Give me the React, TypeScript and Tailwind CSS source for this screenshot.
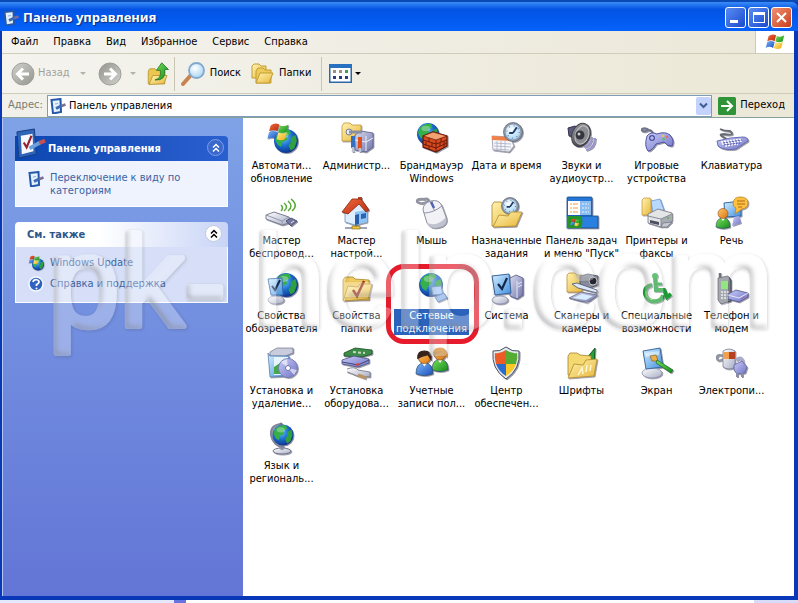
import type { ReactNode } from "react";

type IconProps = { size?: number };

function Svg({ size = 32, children }: { size?: number; children: ReactNode }) {
  return (
    <svg width={size} height={size} viewBox="0 0 32 32" aria-hidden="true" className="shrink-0 overflow-visible">
      {children}
    </svg>
  );
}

/* Shared gradients and filters for every icon */
function Defs() {
  const linear: [string, string, string][] = [
    ["gFolder", "#fff3b0", "#e8b73c"],
    ["gScreen", "#d8f0ff", "#3d8fe0"],
    ["gGrey", "#ffffff", "#a9aec6"],
    ["gSteel", "#d9dbee", "#6f74a8"],
    ["gGreen", "#7be05a", "#128a1c"],
    ["gRed", "#f0683c", "#b82c10"],
    ["gLilac", "#c9ccf8", "#6f73c4"],
    ["gOrange", "#ffc76a", "#dc7410"],
    ["gBlue", "#7db8ff", "#1a4fb8"],
    ["gYellow", "#fff08a", "#f0a810"],
    ["gOff", "#d2d2cc", "#94948e"],
    ["gDark", "#a8a8a8", "#2c2c34"],
  ];
  return (
    <svg width="0" height="0" aria-hidden="true" className="absolute">
      <defs>
        {linear.map(([id, a, b]) => (
          <linearGradient key={id} id={id} x1="0" y1="0" x2="1" y2="1">
            <stop offset="0" stopColor={a} />
            <stop offset="1" stopColor={b} />
          </linearGradient>
        ))}
        <radialGradient id="gGlobe" cx="0.4" cy="0.35" r="0.7">
          <stop offset="0" stopColor="#6fc8f8" />
          <stop offset="0.5" stopColor="#1c6ed0" />
          <stop offset="1" stopColor="#0c2c80" />
        </radialGradient>
        <radialGradient id="gGlass" cx="0.4" cy="0.35" r="0.7">
          <stop offset="0" stopColor="#ffffff" />
          <stop offset="1" stopColor="#a4d4f4" />
        </radialGradient>
        <filter id="soft" x="-20%" y="-20%" width="150%" height="150%">
          <feDropShadow dx="1" dy="1" stdDeviation="0.7" floodColor="#303048" floodOpacity="0.5" />
        </filter>
        <filter id="emboss" x="-5%" y="-20%" width="110%" height="150%">
          <feOffset in="SourceAlpha" dx="3" dy="-3" result="o1" />
          <feComposite in="SourceAlpha" in2="o1" operator="out" result="edge" />
          <feGaussianBlur in="edge" stdDeviation="2.5" result="edgeBlur" />
          <feFlood floodColor="#50505c" floodOpacity="0.6" />
          <feComposite in2="edgeBlur" operator="in" />
          <feComposite in2="SourceAlpha" operator="in" result="inner" />
          <feGaussianBlur in="SourceAlpha" stdDeviation="1.5" />
          <feOffset dx="1" dy="1" />
          <feComposite in2="SourceAlpha" operator="out" result="outBlur" />
          <feFlood floodColor="#303038" floodOpacity="0.2" />
          <feComposite in2="outBlur" operator="in" result="outer" />
          <feFlood floodColor="#ffffff" floodOpacity="0.3" />
          <feComposite in2="SourceAlpha" operator="in" result="body" />
          <feMerge>
            <feMergeNode in="outer" />
            <feMergeNode in="body" />
            <feMergeNode in="inner" />
          </feMerge>
        </filter>
      </defs>
    </svg>
  );
}

function Globe({ cx, cy, r }: { cx: number; cy: number; r: number }) {
  return (
    <g transform={`translate(${cx} ${cy}) scale(${r / 10})`}>
      <circle r="10" fill="url(#gGlobe)" />
      <path d="M-8 -5C-5 -9 0 -10 3 -9L4 -6L0 -4L1 -1L-3 1L-4 5L-7 3L-9 -1Z" fill="#35b04a" />
      <path d="M4 -3L8 -5L9 0L7 6L4 8L2 4L4 1Z" fill="#2ea040" />
      <ellipse cx="-2" cy="-5" rx="4" ry="2.5" fill="#fff" opacity="0.3" />
    </g>
  );
}

function Flag() {
  return (
    <>
      <path d="M2 4Q7 0 12 3L10 11Q6 8 0 11Z" fill="url(#gRed)" />
      <path d="M13 4Q18 6 23 3L21 11Q16 14 11 11Z" fill="url(#gGreen)" />
      <path d="M0 12Q5 9 10 12L8 20Q3 17 -2 20Z" fill="url(#gBlue)" />
      <path d="M11 12Q16 15 21 12L19 20Q14 23 9 20Z" fill="url(#gYellow)" />
    </>
  );
}

function FolderBase() {
  return (
    <>
      <path d="M2 8L4 5H12L14 7L28 8V28H2Z" fill="#f0cc60" stroke="#a8842c" strokeWidth="0.8" />
      <path d="M2 29L7 14L17 15L19 12H31L27 27Z" fill="url(#gFolder)" stroke="#b08a2c" strokeWidth="0.8" />
    </>
  );
}

function Panel({ size }: IconProps) {
  return (
    <Svg size={size}>
      <path d="M2 4L20 1L22 27L4 31Z" fill="#2f65b8" stroke="#173c80" />
      <path d="M6 8L18 6L19 24L7 27Z" fill="#f6f8ff" />
      <path d="M9 15L12 20L17 8" fill="none" stroke="#98202c" strokeWidth="2.2" />
      <path d="M15 21L26 15" stroke="#6ca0dc" strokeWidth="4" />
      <path d="M25 15.500L31 13" stroke="#c85050" strokeWidth="4" />
    </Svg>
  );
}

function SmallPanel() {
  return (
    <svg width="16" height="16" viewBox="0 0 16 16" aria-hidden="true" className="shrink-0">
      <path d="M1.500 2L10.500 1L11 14L3 15.500Z" fill="#e4f0fc" stroke="#2458a8" strokeWidth="2" />
      <path d="M5 6L8 5.500" stroke="#90b4e0" />
      <path d="M6 10.500L12 7.500" stroke="#3c6cb4" strokeWidth="3" />
      <path d="M11.500 8L15.500 6.500" stroke="#7c6c98" strokeWidth="2.500" />
    </svg>
  );
}

function WindowsUpdate({ size }: IconProps) {
  return (
    <Svg size={size}>
      <g filter="url(#soft)">
        <Globe cx={20} cy={19} r={12} />
        <g transform="translate(3 0) scale(0.85)"><Flag /></g>
      </g>
    </Svg>
  );
}

function AdminTools() {
  return (
    <Svg>
      <g filter="url(#soft)">
        <path d="M1 4L3 1H9L11 3H20V19H1Z" fill="url(#gFolder)" stroke="#c09838" strokeWidth="0.8" />
        <path d="M14 13L20 9L32 11V25L25 30L14 28Z" fill="url(#gSteel)" stroke="#555a8c" strokeWidth="0.8" />
        <path d="M25 14V29M14 18L25 20L32 16" stroke="#eceefc" fill="none" />
        <circle cx="8" cy="10" r="3" fill="#e8eaf2" stroke="#777c90" />
        <path d="M8 10H21" stroke="#8a90a4" strokeWidth="3" />
        <path d="M12 14V26" stroke="#3470c0" strokeWidth="4" />
        <path d="M19 15V27" stroke="#e05024" strokeWidth="4" />
        <path d="M12 25V30M19 26V30" stroke="#bcc4d4" strokeWidth="2.500" />
      </g>
    </Svg>
  );
}

function Firewall() {
  return (
    <Svg>
      <g filter="url(#soft)">
        <Globe cx={12} cy={12} r={11} />
        <path d="M7 14L17 10L31 14V24L20 30L7 25Z" fill="#d84a1c" stroke="#55180c" strokeWidth="1.2" />
        <path d="M7 14L20 18L31 14L17 10Z" fill="#f4a070" stroke="#702010" strokeWidth="0.8" />
        <path d="M7 18L20 22L31 18M7 22L20 26L31 21M20 18V30M13 16V20M10 20V24M16 21V25M13 24V28M25 16V20M28 19V22M24 21V24M28 22V26" fill="none" stroke="#6c1c0c" />
      </g>
    </Svg>
  );
}

function Clock({ cx, cy, r }: { cx: number; cy: number; r: number }) {
  return (
    <g transform={`translate(${cx} ${cy}) scale(${r / 10})`}>
      <circle r="10" fill="#8e98a8" stroke="#5a6474" strokeWidth="0.8" />
      <circle r="7.800" fill="url(#gGlass)" />
      <path d="M0 1L4 -5M0 1H-4" stroke="#1c3c68" strokeWidth="2" />
      <circle r="6.500" fill="none" stroke="#5a7ca4" strokeWidth="1.200" strokeDasharray="1 4.100" />
    </g>
  );
}

function DateTime() {
  return (
    <Svg>
      <g filter="url(#soft)">
        <path d="M1 14L19 15L23 24L18 30L2 28Z" fill="#f8f8fc" stroke="#9090a0" strokeWidth="0.800" />
        <path d="M1 14L19 15L20 19L1 18Z" fill="#f08048" />
        <path d="M3 21L20 22M3 24L20 25M3 27L18 28M6 19V28M10 19V29M14 19V29" stroke="#b0b4c8" strokeWidth="0.900" />
        <Clock cx={22} cy={10} r={9.5} />
      </g>
    </Svg>
  );
}

function Sounds() {
  return (
    <Svg>
      <g filter="url(#soft)">
        <path d="M18 25Q25 24 26 15M20 28Q29 26 29 16" fill="none" stroke="#9a94d0" strokeWidth="2" />
        <path d="M2 6L9 4L15 8L11 15L3 14Z" fill="#5c5c80" stroke="#303048" />
        <ellipse cx="15" cy="13" rx="9" ry="12" transform="rotate(22 15 13)" fill="url(#gDark)" stroke="#404048" />
        <ellipse cx="16" cy="13" rx="6.500" ry="9.500" transform="rotate(22 16 13)" fill="#8c8c92" stroke="#c8c8cc" />
        <circle cx="14" cy="13" r="4.500" fill="#35353d" />
        <circle cx="13" cy="12" r="1.500" fill="#c8c8d0" />
      </g>
    </Svg>
  );
}

function Games() {
  return (
    <Svg>
      <g filter="url(#soft)">
        <path d="M12 12Q10 6 5 9Q0 10 1 7Q4 5 8 8" fill="none" stroke="#70748c" strokeWidth="2" />
        <path d="M6 14Q10 9 16 12Q24 9 29 13Q34 19 31 24Q27 25 23 20L15 22Q11 29 7 29Q3 24 6 14Z" fill="url(#gLilac)" stroke="#5054a0" />
        <circle cx="11" cy="16" r="3" fill="#4c50a0" />
        <path d="M9 16H13M11 14V18" stroke="#d8dafc" />
        <circle cx="22" cy="14" r="1.300" fill="#e0c860" />
        <circle cx="26" cy="15" r="1.300" fill="#e07070" />
        <circle cx="22.500" cy="17" r="1.300" fill="#60b868" />
      </g>
    </Svg>
  );
}

function KeyboardIcon() {
  return (
    <Svg>
      <g filter="url(#soft)">
        <path d="M11 17Q0 12 8 12Q20 14 14 9Q8 9 4 7" fill="none" stroke="#686c74" strokeWidth="1.800" />
        <path d="M1 19Q15 15 27 15Q32 15 32 19L20 27Q8 29 2 24Z" fill="url(#gLilac)" stroke="#6064ac" strokeWidth="0.900" />
        <path d="M5 20L26 17M6 22L26 19M9 24L22 22" stroke="#fff" strokeWidth="1.500" strokeDasharray="2 1" />
        <path d="M7 21L26 18M8 23L24 21" stroke="#484c98" strokeWidth="0.800" strokeDasharray="2 1" />
      </g>
    </Svg>
  );
}

function Wireless() {
  return (
    <Svg>
      <g filter="url(#soft)">
        <path d="M0 18L8 15L23 20V26L16 28L0 22Z" fill="url(#gGrey)" stroke="#70748c" strokeWidth="0.900" />
        <path d="M0 18L16 24L23 20M16 24V28" fill="none" stroke="#9498ac" />
        <path d="M20 24L25 21L31 24L25 29Z" fill="#74789c" stroke="#50547c" />
        <path d="M25 26L28 24" stroke="#e8eaf4" />
      </g>
      <path d="M15 8Q18 11 15 14M18 6Q23 10 18 14M22 4Q28 9 22 14M25 2Q33 8 26 14" fill="none" stroke="#58a838" strokeWidth="1.500" />
    </Svg>
  );
}

function NetworkHome() {
  return (
    <Svg>
      <path d="M4 31H26M15 27V31" stroke="#8088a0" strokeWidth="1.500" />
      <rect x="11" y="29" width="8" height="3" fill="#e8c440" stroke="#94761c" strokeWidth="0.700" />
      <g filter="url(#soft)">
        <path d="M4 15L16 4L26 14V25L14 28L4 25Z" fill="#dceeff" stroke="#7090b4" strokeWidth="0.800" />
        <path d="M14 15L26 13V25L14 28Z" fill="#90c4f4" />
        <rect x="17" y="0" width="4" height="7" fill="#b84828" />
        <path d="M1 15L11 2L20 2L28 13L25 15L18 7L7 17Z" fill="url(#gRed)" stroke="#882810" strokeWidth="0.800" />
        <path d="M14 18L18 17V27L14 28Z" fill="#2c5cac" />
        <path d="M20 17L25 16V21L20 22Z" fill="#2c64b8" />
      </g>
    </Svg>
  );
}

function MouseIcon() {
  return (
    <Svg>
      <g filter="url(#soft)">
        <path d="M13 8Q14 0 8 2Q0 1 1 5Q6 8 12 4" fill="none" stroke="#9094a0" strokeWidth="2" />
        <path d="M7 13Q7 6 15 4Q23 2 26 9L30 20Q32 28 24 30Q15 33 11 26Z" fill="#f2f2f6" stroke="#8c8f9c" />
        <path d="M30 20Q32 28 24 30Q15 33 11 26Q22 30 30 20Z" fill="#c0c3d0" />
        <path d="M8 16Q17 16 26 9M16 4L18 13" fill="none" stroke="#8c90a4" />
        <path d="M15 5L18 11" stroke="#5064b0" strokeWidth="2.500" />
      </g>
    </Svg>
  );
}

function Scheduled() {
  return (
    <Svg>
      <g filter="url(#soft)">
        <path d="M1 8L3 5H10L12 7L25 8V29H1Z" fill="url(#gFolder)" stroke="#a8842c" strokeWidth="0.800" />
        <Clock cx={19} cy={9} r={8.5} />
        <path d="M2 30L8 18L17 19L20 15H31L25 29Z" fill="url(#gFolder)" stroke="#b08a2c" strokeWidth="0.800" />
      </g>
    </Svg>
  );
}

function Taskbar() {
  return (
    <Svg>
      <g filter="url(#soft)">
        <rect x="1" y="0" width="25" height="20" rx="1" fill="#2676d8" stroke="#184888" strokeWidth="0.800" />
        <rect x="2" y="4" width="12" height="14" fill="#fff" />
        <rect x="14" y="4" width="11" height="14" fill="#8cbcf0" />
        <path d="M4 7H12M4 11H12M4 15H12" stroke="#f0a040" strokeDasharray="2 1 5 1" />
        <path d="M16 7H23M16 11H23M16 15H23" stroke="#e4f2ff" strokeDasharray="2 1" />
        <rect x="1" y="19" width="31" height="12" fill="#2c80e0" stroke="#184888" strokeWidth="0.800" />
        <path d="M1 19H15Q18 25 15 31H1Z" fill="#24942c" />
        <g transform="translate(5 21) scale(0.380)"><Flag /></g>
      </g>
    </Svg>
  );
}

function Printers() {
  return (
    <Svg>
      <g filter="url(#soft)">
        <path d="M1 3L3 1H9L10 3V18H1Z" fill="url(#gFolder)" stroke="#c89c38" strokeWidth="0.800" />
        <path d="M10 4L19 2L23 13L12 16Z" fill="#b8d8fc" stroke="#6c94c8" strokeWidth="0.800" />
        <path d="M7 17L17 12L31 16V24L20 30L7 26Z" fill="#e4e5e6" stroke="#707480" strokeWidth="0.800" />
        <path d="M20 22L31 17V24L20 30Z" fill="#a8abb2" />
        <path d="M7 19L20 22L31 17M20 22V30" fill="none" stroke="#888c98" />
        <path d="M9 23L18 25V28L9 26Z" fill="#4c5060" />
        <path d="M22 26L31 25L26 30L20 30Z" fill="#c4c8d0" stroke="#606470" strokeWidth="0.600" />
        <circle cx="27" cy="21" r="1" fill="#58b048" />
      </g>
    </Svg>
  );
}

function Person({ x, y, shirt, hair }: { x: number; y: number; shirt: string; hair?: string }) {
  return (
    <g transform={`translate(${x} ${y})`}>
      <path d="M0 19Q0 10 7 10Q14 10 14 19Q7 22 0 19Z" fill={shirt} stroke="#284868" strokeWidth="0.600" />
      <path d="M5 10L7 13L9 10Z" fill="#fff" />
      <circle cx="7" cy="5.500" r="5" fill="url(#gOrange)" stroke="#8c4c14" strokeWidth="0.600" />
      {hair && <path d="M1.500 6Q1 0 7 0Q13 0 12.500 7L10 3Q5 4 1.500 6Z" fill={hair} stroke={hair} />}
    </g>
  );
}

function Speech() {
  return (
    <Svg>
      <g filter="url(#soft)">
        <path d="M8 6L25 4L25 19L9 20Z" fill="url(#gScreen)" stroke="#3468a0" />
        <path d="M18 20L23 19L25 26L16 29Z" fill="url(#gLilac)" />
        <path d="M24 0Q32 0 32 6Q32 11 26 12L19 17L20 11Q17 10 17 6Q18 0 24 0Z" fill="#ffc040" stroke="#bc8020" strokeWidth="0.800" />
        <path d="M21 4H29M21 7H29M22 10H26" stroke="#a86c18" />
        <Person x={0} y={11} shirt="url(#gGreen)" />
      </g>
    </Svg>
  );
}

function InternetOptions() {
  return (
    <Svg>
      <g filter="url(#soft)">
        <Globe cx={20} cy={13} r={12} />
        <ellipse cx="10" cy="28" rx="8" ry="4" fill="url(#gGrey)" stroke="#8488a8" strokeWidth="0.700" />
        <path d="M2 7L16 6L17 23L5 23Z" fill="url(#gScreen)" stroke="#386cac" />
        <path d="M6 14L9 18L14 8" fill="none" stroke="#14284c" strokeWidth="2" />
      </g>
    </Svg>
  );
}

function FolderOptions() {
  return (
    <Svg>
      <g filter="url(#soft)">
        <FolderBase />
        <path d="M12 18L16 24L23 9" fill="none" stroke="#982818" strokeWidth="2.500" />
      </g>
    </Svg>
  );
}

function Network() {
  return (
    <Svg>
      <Globe cx={15} cy={13} r={12} />
      <g filter="url(#soft)">
        <path d="M15 15L25 14L27 22L17 23Z" fill="#a4c8f8" stroke="#5884c0" />
        <path d="M19 25L28 21L31 26L22 30Z" fill="#8cb0e8" stroke="#5078b4" />
      </g>
    </Svg>
  );
}

function System() {
  return (
    <Svg>
      <g filter="url(#soft)">
        <path d="M19 6L25 3L32 6V23L26 27L19 24Z" fill="url(#gSteel)" stroke="#545888" strokeWidth="0.800" />
        <path d="M26 9V26M27 12L31 10M27 15L31 13" stroke="#e8eafc" />
        <ellipse cx="9" cy="28" rx="8" ry="4" fill="url(#gGrey)" stroke="#8084a4" strokeWidth="0.700" />
        <path d="M1 4L18 2L20 21L4 23Z" fill="url(#gScreen)" stroke="#3c649c" />
        <path d="M7 12L11 17L16 6" fill="none" stroke="#14284c" strokeWidth="2.200" />
      </g>
    </Svg>
  );
}

function Scanners() {
  return (
    <Svg>
      <g filter="url(#soft)">
        <path d="M1 3L3 1H9L11 3H16V20H1Z" fill="url(#gFolder)" stroke="#c09030" strokeWidth="0.800" />
        <path d="M14 4L22 2L32 4V13L23 16L14 12Z" fill="#8a8e9c" stroke="#484c58" strokeWidth="0.800" />
        <circle cx="27" cy="9" r="4" fill="#25252e" stroke="#c4c8d4" />
        <path d="M3 26L15 20L32 23L21 31Z" fill="url(#gSteel)" stroke="#606480" strokeWidth="0.800" />
        <path d="M7 26L16 22L27 24L20 28Z" fill="#d8ecff" />
        <path d="M6 12L11 11L31 18V21L12 16Z" fill="#dde8f8" stroke="#586078" strokeWidth="0.900" />
      </g>
    </Svg>
  );
}

function Accessibility() {
  return (
    <Svg>
      <g filter="url(#soft)" fill="none" stroke="#1f9c34" strokeWidth="4">
        <circle cx="14" cy="4" r="3" fill="#28a83c" stroke="none" />
        <path d="M14 6L15 18H23L26 25L30 22" />
        <path d="M11 13Q3 14 4 22Q7 31 16 29Q21 28 22 23" />
        <path d="M14 12H21" strokeWidth="3" />
        <path d="M5 19Q4 26 12 28" stroke="#80dc60" strokeWidth="1" />
      </g>
    </Svg>
  );
}

function PhoneModem() {
  return (
    <Svg>
      <g filter="url(#soft)">
        <path d="M4 6V1" stroke="#30343c" strokeWidth="2.500" />
        <path d="M2 6L12 4L15 8V29L5 32L2 28Z" fill="#7c828c" stroke="#30343c" strokeWidth="0.800" />
        <path d="M5 9H12V17H5Z" fill="#64dc48" />
        <path d="M5 20H13M5 23H13M5 26H13" stroke="#e4e8ec" strokeWidth="1.500" strokeDasharray="2 1" />
        <path d="M12 22L20 18L32 21V25L23 30L12 27Z" fill="url(#gLilac)" stroke="#50548c" strokeWidth="0.800" />
        <path d="M12 23L23 26L32 21" fill="none" stroke="#e4e6fc" />
        <path d="M25 27L30 24" stroke="#c84848" strokeDasharray="1 1" />
      </g>
    </Svg>
  );
}

function AddRemove() {
  return (
    <Svg>
      <g filter="url(#soft)">
        <path d="M4 5L11 1H27V6L19 9L4 9Z" fill="#c8ccdc" stroke="#70748c" strokeWidth="0.700" />
        <path d="M2 6L4 9H23V29L4 30Z" fill="url(#gScreen)" stroke="#5c7ca8" strokeWidth="0.800" />
        <path d="M8 10H22V28H8Z" fill="#e8f4fc" />
        <path d="M8 20L14 16L18 20V27H8Z" fill="#44a84c" />
        <circle cx="22" cy="21" r="9.500" fill="url(#gLilac)" stroke="#7074b0" strokeWidth="0.800" />
        <path d="M22 21L15 15L21 12ZM22 21L28 28L31 23Z" fill="#fff" opacity="0.600" />
        <circle cx="22" cy="21" r="2.500" fill="#fff" stroke="#7074b0" />
      </g>
    </Svg>
  );
}

function AddHardware() {
  return (
    <Svg>
      <g filter="url(#soft)">
        <path d="M3 6L14 1L31 3V7L21 10L3 9Z" fill="#3c8c48" stroke="#204c28" strokeWidth="0.800" />
        <path d="M12 5L24 6" stroke="#c4d8c0" strokeWidth="2" strokeDasharray="3 2" />
        <path d="M1 13L13 9L28 12V16L17 20L1 17Z" fill="url(#gLilac)" stroke="#4c5084" strokeWidth="0.800" />
        <path d="M1 15L17 18L28 13" fill="none" stroke="#404478" />
        <path d="M15 18L18 17" stroke="#d04848" strokeWidth="2" />
        <path d="M6 22Q14 19 17 23L29 25V30L16 29Q10 26 6 25" fill="url(#gGrey)" stroke="#70747c" strokeWidth="0.800" />
        <path d="M17 28L25 31" stroke="#bc9460" strokeWidth="3" />
      </g>
    </Svg>
  );
}

function Users() {
  return (
    <Svg>
      <g filter="url(#soft)">
        <g transform="translate(16 1) scale(1.150)"><Person x={0} y={0} shirt="url(#gGreen)" hair="#d88c28" /></g>
        <g transform="translate(0 4) scale(1.200)"><Person x={0} y={0} shirt="url(#gBlue)" hair="#35241c" /></g>
      </g>
    </Svg>
  );
}

function Security() {
  return (
    <Svg>
      <g filter="url(#soft)">
        <path d="M15 0Q21 5 28 4Q30 22 15 32Q0 22 2 4Q9 5 15 0Z" fill="#e4e8f0" stroke="#485060" />
        <path d="M15 3Q9 7 4 6Q3 11 5 17H15Z" fill="#ec5c28" />
        <path d="M15 3Q21 7 26 6Q27 11 25 17H15Z" fill="#54ac30" />
        <path d="M5 17H15V29Q8 25 5 17Z" fill="#2c6cd0" />
        <path d="M25 17H15V29Q22 25 25 17Z" fill="#fcc828" />
      </g>
    </Svg>
  );
}

function Fonts() {
  return (
    <Svg>
      <g filter="url(#soft)">
        <path d="M20 12L29 1L28 20Z" fill="#28a038" stroke="#145c20" />
        <path d="M2 9L4 6H11L14 8L25 9V28H2Z" fill="#f4d870" stroke="#a8842c" strokeWidth="0.800" />
        <path d="M2 31L8 17L17 18L20 13L31 12L28 29Z" fill="url(#gFolder)" stroke="#b08a2c" strokeWidth="0.800" />
        <path d="M12 28L16 21L17 27M21 18L20 25M25 18L24 24" stroke="#fff8d0" strokeWidth="1.500" fill="none" />
      </g>
    </Svg>
  );
}

function Display() {
  return (
    <Svg>
      <g filter="url(#soft)">
        <ellipse cx="11" cy="26" rx="10" ry="5" fill="url(#gGrey)" stroke="#8488a8" strokeWidth="0.700" />
        <path d="M2 4L19 1L22 20L5 22Z" fill="url(#gScreen)" stroke="#40689c" />
        <path d="M4 6L18 4L18 8L5 10Z" fill="#fff" opacity="0.500" />
        <path d="M9 9L15 8L17 14L11 14Z" fill="#e8b048" stroke="#90601c" strokeWidth="0.700" />
        <path d="M16 13L32 23L30 26L15 16Z" fill="url(#gGreen)" stroke="#186420" strokeWidth="0.700" />
      </g>
    </Svg>
  );
}

function Power() {
  return (
    <Svg>
      <g filter="url(#soft)">
        <path d="M8 9Q0 6 1 12Q2 15 7 12" fill="none" stroke="#9094a0" strokeWidth="2" />
        <path d="M7 4Q13 0 19 4V20Q13 24 7 20Z" fill="url(#gGrey)" stroke="#787c94" strokeWidth="0.800" />
        <path d="M7 5H13V12H7Z" fill="#f0a050" />
        <path d="M13 5H19V12H13Z" fill="#b84020" />
        <path d="M20 13Q26 8 27 16" fill="none" stroke="#a8accc" strokeWidth="3" />
        <path d="M18 18L26 14L31 20L29 26L21 27L18 23Z" fill="url(#gLilac)" stroke="#6468a0" strokeWidth="0.900" />
        <path d="M21 26V30M26 26V30" stroke="#888ca4" strokeWidth="2" />
      </g>
    </Svg>
  );
}

function Regional() {
  return (
    <Svg>
      <g filter="url(#soft)">
        <ellipse cx="16" cy="29" rx="9" ry="3" fill="url(#gGrey)" stroke="#707488" />
        <path d="M16 22V28" stroke="#8c90a4" strokeWidth="3" />
        <path d="M15 2Q4 3 5 13Q7 24 18 25" fill="none" stroke="#80849c" strokeWidth="2" />
        <Globe cx={17} cy={13} r={10.5} />
        <circle cx="15" cy="2" r="1.500" fill="#70748c" />
      </g>
    </Svg>
  );
}

function Help({ size }: IconProps) {
  return (
    <Svg size={size}>
      <circle cx="16" cy="16" r="14" fill="#2f62c0" stroke="#f4f8ff" strokeWidth="3" />
      <path d="M10 12Q11 7 16 7Q22 8 22 12Q21 16 17 17V20" fill="none" stroke="#fff" strokeWidth="3.500" />
      <circle cx="17" cy="25" r="2" fill="#fff" />
    </Svg>
  );
}

function RoundArrow({ flip }: { flip?: boolean }) {
  return (
    <svg width="24" height="24" viewBox="0 0 24 24" aria-hidden="true" className={flip ? "rotate-180" : ""}>
      <circle cx="12" cy="12" r="11" fill="url(#gOff)" stroke="#a0a09a" />
      <path d="M18 12H7M12 6.500L6.500 12L12 17.500" fill="none" stroke="#fff" strokeWidth="3" />
    </svg>
  );
}

function Caret({ className }: { className: string }) {
  return <span className={`inline-block border-x-[3px] border-t-[3px] border-x-transparent ${className}`} />;
}

function Chevrons() {
  return (
    <svg width="10" height="12" viewBox="0 0 10 12" aria-hidden="true">
      <path d="M2 5.500L5 2.500L8 5.500M2 9.500L5 6.500L8 9.500" fill="none" stroke="currentColor" strokeWidth="1.500" />
    </svg>
  );
}

type Item = { lines: string[]; icon: () => ReactNode; selected?: boolean };

const items: Item[] = [
  { lines: ["Автомати...", "обновление"], icon: () => <WindowsUpdate /> },
  { lines: ["Администр..."], icon: AdminTools },
  { lines: ["Брандмауэр", "Windows"], icon: Firewall },
  { lines: ["Дата и время"], icon: DateTime },
  { lines: ["Звуки и", "аудиоустр..."], icon: Sounds },
  { lines: ["Игровые", "устройства"], icon: Games },
  { lines: ["Клавиатура"], icon: KeyboardIcon },
  { lines: ["Мастер", "беспровод..."], icon: Wireless },
  { lines: ["Мастер", "настрой..."], icon: NetworkHome },
  { lines: ["Мышь"], icon: MouseIcon },
  { lines: ["Назначенные", "задания"], icon: Scheduled },
  { lines: ["Панель задач", "и меню \"Пуск\""], icon: Taskbar },
  { lines: ["Принтеры и", "факсы"], icon: Printers },
  { lines: ["Речь"], icon: Speech },
  { lines: ["Свойства", "обозревателя"], icon: InternetOptions },
  { lines: ["Свойства", "папки"], icon: FolderOptions },
  { lines: ["Сетевые", "подключения"], icon: Network, selected: true },
  { lines: ["Система"], icon: System },
  { lines: ["Сканеры и", "камеры"], icon: Scanners },
  { lines: ["Специальные", "возможности"], icon: Accessibility },
  { lines: ["Телефон и", "модем"], icon: PhoneModem },
  { lines: ["Установка и", "удаление..."], icon: AddRemove },
  { lines: ["Установка", "оборудова..."], icon: AddHardware },
  { lines: ["Учетные", "записи пол..."], icon: Users },
  { lines: ["Центр", "обеспечен..."], icon: Security },
  { lines: ["Шрифты"], icon: Fonts },
  { lines: ["Экран"], icon: Display },
  { lines: ["Электропи..."], icon: Power },
  { lines: ["Язык и", "региональ..."], icon: Regional },
];

function ControlItem({ item }: { item: Item }) {
  const Icon = item.icon;
  return (
    <button type="button" className="relative flex h-[75px] flex-col items-center gap-[5px] leading-[13px]">
      <Icon />
      <span className={`whitespace-nowrap px-0.5 ${item.selected ? "bg-[#2a62bc] text-white" : ""}`}>
        {item.lines.map((line) => (
          <span key={line} className="block">{line}</span>
        ))}
      </span>
      {item.selected && (
        <span className="pointer-events-none absolute -left-2 -top-2 h-[80px] w-[93px] rounded-[18px] border-[5px] border-[#e61c2c]" />
      )}
    </button>
  );
}

const menus = ["Файл", "Правка", "Вид", "Избранное", "Сервис", "Справка"];

export default function App() {
  return (
    <div className="relative flex min-h-screen flex-col overflow-hidden bg-[#0a4ab4] pt-0.5 font-['DejaVu_Sans_Condensed','DejaVu_Sans',sans-serif] text-[11px] text-black">
      <Defs />
      <div className="flex flex-1 flex-col bg-[#0838b8] pb-1 pl-0.5 pr-1">
        <header className="-ml-0.5 -mr-1 flex h-[29px] items-center gap-1 rounded-tr-md bg-linear-to-b from-[#3a8cf8] via-[#0353e4] via-25% to-[#0562fa] pl-[3px] pr-1.5 pt-0.5">
          <SmallPanel />
          <h1 className="flex-1 font-['Noto_Sans',sans-serif] text-[13px] font-bold text-white [text-shadow:1px_1px_1px_#0a2a80]">Панель управления</h1>
          <div className="flex gap-0.5">
            <button type="button" aria-label="Свернуть" className="flex size-[21px] items-end rounded-[3px] border border-white bg-linear-to-br from-[#5a8cf4] to-[#1c48cc] p-1">
              <span className="h-[3px] w-2 bg-white" />
            </button>
            <button type="button" aria-label="Развернуть" className="flex size-[21px] items-center justify-center rounded-[3px] border border-white bg-linear-to-br from-[#5a8cf4] to-[#1c48cc]">
              <span className="h-[11px] w-3 border border-t-[3px] border-white" />
            </button>
            <button type="button" aria-label="Закрыть" className="flex size-[21px] items-center justify-center rounded-[3px] border border-white bg-linear-to-br from-[#f09070] to-[#c83c14]">
              <svg width="13" height="13" viewBox="0 0 13 13" aria-hidden="true"><path d="M2 2L11 11M11 2L2 11" stroke="#fff" strokeWidth="2" /></svg>
            </button>
          </div>
        </header>

        <nav className="flex h-[23px] items-stretch border-b border-[#d0ccba] bg-linear-to-r from-[#f4f3ee] to-[#ebe8d8]">
          <div className="flex flex-1 items-center gap-[15px] pl-[9px]">
            {menus.map((menu) => <button key={menu} type="button">{menu}</button>)}
          </div>
          <div className="flex w-[39px] items-center justify-center border-l border-[#cfcbb8] bg-white">
            <svg width="20" height="20" viewBox="-3 0 27 24" aria-hidden="true"><Flag /></svg>
          </div>
        </nav>

        <div className="flex h-[40px] items-center border-b border-[#d0ccba] bg-linear-to-r from-[#f4f3ee] to-[#ebe8d6] pl-[9px]">
          <button type="button" disabled className="flex items-center gap-[3px] text-[#a4a298]"><RoundArrow />Назад</button>
          <Caret className="ml-2.5 border-t-[#b4b2a8]" />
          <button type="button" disabled aria-label="Вперед" className="ml-3"><RoundArrow flip /></button>
          <Caret className="ml-2 border-t-[#b4b2a8]" />
          <button type="button" aria-label="Вверх" className="ml-2.5 mr-1">
            <svg width="24" height="24" viewBox="0 0 32 32" aria-hidden="true">
              <path d="M3 12L5 9H12L14 11H25V29H3Z" fill="#ecc750" stroke="#b08c28" />
              <path d="M4 30L9 18H28L24 29Z" fill="url(#gFolder)" stroke="#b08c28" />
              <path d="M12 24Q21 22 19 11H14L21 1L30 10H25Q27 25 12 24Z" fill="url(#gGreen)" stroke="#187024" />
            </svg>
          </button>
          <div className="h-[34px] w-px bg-[#c8c5b2]" />
          <button type="button" className="ml-1.5 flex items-center gap-[5px]">
            <svg width="24" height="24" viewBox="0 0 24 24" aria-hidden="true">
              <path d="M10 13L2 22" stroke="#c88450" strokeWidth="4" strokeLinecap="round" />
              <circle cx="15.500" cy="8.500" r="7.500" fill="url(#gGlass)" stroke="#82a8cc" strokeWidth="1.800" />
            </svg>
            Поиск
          </button>
          <button type="button" className="ml-2.5 flex items-center gap-[5px]">
            <svg width="23" height="24" viewBox="0 0 23 24" aria-hidden="true">
              <path d="M1 4L3 2H8L10 4H15V16H1Z" fill="url(#gFolder)" stroke="#c29c34" />
              <path d="M5 9L7 6H12L14 8H20V21H5Z" fill="#eecb58" stroke="#c29c34" />
              <path d="M5 21L9 11H22L18 21Z" fill="url(#gFolder)" stroke="#c29c34" />
            </svg>
            Папки
          </button>
          <div className="ml-2.5 h-[34px] w-px bg-[#c8c5b2]" />
          <button type="button" aria-label="Вид значков" className="ml-[7px] flex items-center gap-[3px]">
            <svg width="23" height="19" viewBox="0 0 23 19" aria-hidden="true">
              <rect x="0.500" y="0.500" width="22" height="18" rx="1" fill="#fff" stroke="#2c68a8" strokeWidth="2" />
              <rect width="23" height="4" fill="#2870c0" />
              <path d="M4 7.500H19" stroke="#a09080" strokeWidth="3" strokeDasharray="3 3" />
              <path d="M4 13.500H19" stroke="#283c88" strokeWidth="3" strokeDasharray="3 3" />
              <rect x="16" y="6" width="3" height="3" fill="#40a048" />
            </svg>
            <Caret className="border-t-black" />
          </button>
        </div>

        <form className="flex h-[23px] items-center bg-linear-to-r from-[#f1f0ea] to-[#ebe8d8] pl-1.5" onSubmit={(e) => e.preventDefault()}>
          <label htmlFor="address" className="w-[39px] text-[#7c7b72]">Адрес:</label>
          <div className="flex h-[22px] flex-1 items-center gap-[3px] border border-[#7f9db9] bg-white pl-0.5">
            <SmallPanel />
            <input id="address" defaultValue="Панель управления" className="min-w-0 flex-1 bg-transparent pt-0.5 outline-none" />
            <button type="button" aria-label="Список адресов" className="flex h-[18px] w-[15px] items-center justify-center rounded-xs bg-[#c3d3fb]">
              <svg width="9" height="7" viewBox="0 0 9 7" aria-hidden="true"><path d="M1 1.500L4.500 5L8 1.500" fill="none" stroke="#405c94" strokeWidth="2" /></svg>
            </button>
          </div>
          <button type="submit" className="ml-1.5 flex items-center gap-1 pr-[9px]">
            <svg width="18" height="18" viewBox="0 0 18 18" aria-hidden="true">
              <rect width="18" height="18" rx="1.500" fill="#2f9438" />
              <path d="M3 9H14M9 4L14 9L9 14" fill="none" stroke="#fff" strokeWidth="2" />
            </svg>
            Переход
          </button>
        </form>

        <div className="flex flex-1 border-t border-[#87a09a]">
          <aside className="flex w-[241px] shrink-0 flex-col gap-[15px] border-l border-[#b4c8f4] bg-linear-to-b from-[#7fa2e7] to-[#6375d6] pl-3 pr-[15px] pt-[18px]">
            <section>
              <h2 className="flex h-[25px] items-center rounded-tr-sm bg-linear-to-r from-[#0c47b0] to-[#2a5fd0] pr-1 pt-0.5 font-bold text-white">
                <span className="-mt-3 mr-0.5"><Panel size={31} /></span>
                <span className="flex-1">Панель управления</span>
                <button type="button" aria-label="Свернуть раздел" className="mb-1 flex size-[17px] items-center justify-center rounded-full border border-[#7da0ea] bg-[#3a68cc]"><Chevrons /></button>
              </h2>
              <div className="flex gap-1.5 border border-t-0 border-white bg-[#eff3fd] px-3 pb-[9px] pt-2.5">
                <SmallPanel />
                <a href="#category" className="leading-[13px] text-[#3a64a4]">Переключение к виду по категориям</a>
              </div>
            </section>

            <section>
              <h2 className="flex h-[25px] items-center rounded-t-sm bg-linear-to-r from-white from-40% to-[#c8d4f6] pl-3 pr-1.5 pt-0.5 font-bold text-[#2c568c]">
                <span className="flex-1">См. также</span>
                <button type="button" aria-label="Свернуть раздел" className="mb-1 flex size-[17px] items-center justify-center rounded-full border border-[#c0c8dc] bg-white text-black"><Chevrons /></button>
              </h2>
              <ul className="flex flex-col gap-1 border border-t-0 border-white bg-[#d6dff7] px-3 pb-2.5 pt-2 text-[#3a64a4]">
                <li><a href="#update" className="flex items-center gap-1.5"><WindowsUpdate size={16} />Windows Update</a></li>
                <li><a href="#help" className="flex items-center gap-1.5"><Help size={16} />Справка и поддержка</a></li>
              </ul>
            </section>
          </aside>

          <main className="grid flex-1 grid-cols-[repeat(auto-fill,75px)] content-start bg-white pl-px pt-1">
            {items.map((item) => <ControlItem key={item.lines.join(" ")} item={item} />)}
          </main>
        </div>
      </div>
      <footer className="flex h-[3px] bg-white">
        <span className="w-[174px] bg-[#e4e8fc]" />
        <span className="w-3 bg-[#6474e0]" />
        <span className="flex-1" />
        <span className="w-11 bg-[#d8dcf8]" />
      </footer>

      <svg className="pointer-events-none absolute left-0 top-[200px] h-[180px] w-full" aria-hidden="true">
        <g fontFamily="Liberation Sans, sans-serif" fontSize="128" fill="#fff" stroke="#fff" strokeWidth="6" strokeLinejoin="round" filter="url(#emboss)">
          <text x="48" y="126">pk-</text>
          <text x="253" y="126">help.com</text>
        </g>
      </svg>
    </div>
  );
}
